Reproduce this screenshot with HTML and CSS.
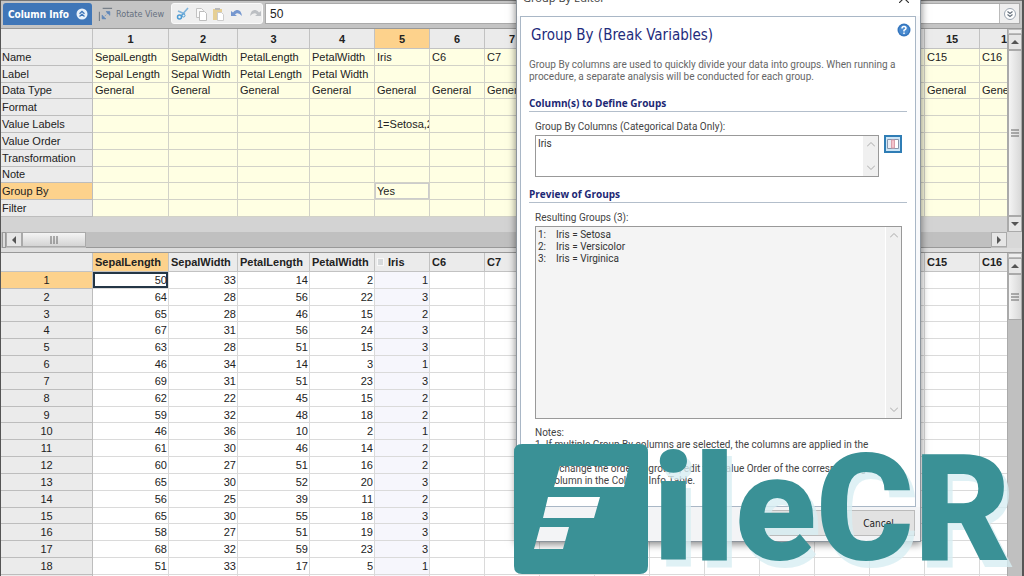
FILE: index.html
```html
<!DOCTYPE html>
<html lang="en">
<head>
<meta charset="utf-8">
<title>Group By Editor</title>
<link rel="stylesheet" href="styles.css">
</head>
<body>
<main class="app">
  <header class="toolbar">
    <button class="tab" type="button">Column Info
      <svg class="tab-icon" viewBox="0 0 12 12"><circle cx="6" cy="6" r="5.5" fill="#e8f1fa"/><path d="M3.5 5.8 6 3.5l2.5 2.3M3.5 8.6 6 6.3l2.5 2.3" fill="none" stroke="#3f76b8" stroke-width="1.3"/></svg>
    </button>
    <button class="rotate" type="button">
      <svg class="rotate-icon" viewBox="0 0 16 16"><path d="M1.500 5v10M5 1.500h10" stroke="#777f88" stroke-width="1.2"/><path d="M5 12 12 5" stroke="#7d9cc4" stroke-dasharray="2 1"/><path d="M8.500 5H12.500V9M4.500 8.500V12.500H8.500" fill="#5f86b8" stroke="#5f86b8"/></svg>
      Rotate View
    </button>
    <div class="tools">
      <button type="button" aria-label="Cut"><svg viewBox="0 0 14 14"><path d="M12 1 5 9M2 4l7 3" stroke="#7fb4dc" stroke-width="1.600"/><circle cx="3.500" cy="10" r="2" fill="none" stroke="#4d9bd3" stroke-width="1.500"/><circle cx="7.500" cy="8.500" r="1.500" fill="none" stroke="#4d9bd3"/></svg></button>
      <button type="button" aria-label="Copy"><svg viewBox="0 0 14 14"><path d="M2.500 1.500h5l2 2v7h-7z" fill="#fafafa" stroke="#c3c3c3"/><path d="M5.500 4.500h5l2 2v7h-7z" fill="#fff" stroke="#bdbdbd"/></svg></button>
      <button type="button" aria-label="Paste"><svg viewBox="0 0 14 14"><path d="M1 2h9v11H1z" fill="#e6cf94"/><path d="M3 1h5v2H3z" fill="#b9b9b9"/><path d="M5.500 5.500h4l2 2v6h-6z" fill="#fff" stroke="#ccc"/></svg></button>
      <button type="button" aria-label="Undo"><svg viewBox="0 0 14 14"><path d="M1 4v5h6L5 7.500Q8 4.500 12 9 11 2 6.500 3 4 3.500 3 5.500z" fill="#7597cf"/></svg></button>
      <button type="button" aria-label="Redo"><svg viewBox="0 0 14 14"><path d="M13 4v5H7l2-1.500Q6 4.500 2 9 3 2 7.500 3 10 3.500 11 5.500z" fill="#bcbfc3"/></svg></button>
    </div>
    <div class="formula">
      <input type="text" value="50" aria-label="Cell value">
      <button type="button" aria-label="Expand"><svg viewBox="0 0 12 12"><circle cx="6" cy="6" r="5.500" fill="#fff" stroke="#9aa4b0"/><path d="M3.500 3.500 6 5.500l2.500-2M3.500 6.500 6 8.500l2.500-2" fill="none" stroke="#66717d" stroke-width="1.200"/></svg></button>
    </div>
  </header>

  <section class="pane info-pane">
    <div class="pane-view">
      <table class="sheet info" id="info"></table>
    </div>
    <div class="vbar">
      <span class="split"></span>
      <button type="button" class="arrow" aria-label="Scroll up"><svg viewBox="0 0 8 8"><path d="M0 6h8L4 2z"/></svg></button>
      <span class="thumb"><svg viewBox="0 0 8 8"><path d="M0 1h8M0 4h8M0 7h8" stroke="#666"/></svg></span>
      <button type="button" class="arrow" aria-label="Scroll down"><svg viewBox="0 0 8 8"><path d="M0 2h8L4 6z"/></svg></button>
    </div>
  </section>
  <div class="hbar">
    <span class="split"></span>
    <button type="button" class="arrow" aria-label="Scroll left"><svg viewBox="0 0 8 8"><path d="M6 0v8L2 4z"/></svg></button>
    <span class="thumb"><svg viewBox="0 0 8 8"><path d="M1 0v8M4 0v8M7 0v8" stroke="#666"/></svg></span>
    <span class="track"></span>
    <button type="button" class="arrow" aria-label="Scroll right"><svg viewBox="0 0 8 8"><path d="M2 0v8l4-4z"/></svg></button>
    <span class="corner"></span>
  </div>
  <section class="pane data-pane">
    <div class="pane-view">
      <table class="sheet data" id="data"></table>
    </div>
    <div class="vbar">
      <span class="split"></span>
      <button type="button" class="arrow" aria-label="Scroll up"><svg viewBox="0 0 8 8"><path d="M0 6h8L4 2z"/></svg></button>
      <span class="thumb short"><svg viewBox="0 0 8 8"><path d="M0 1h8M0 4h8M0 7h8" stroke="#666"/></svg></span>
    </div>
  </section>
</main>

<div class="dialog" role="dialog" aria-labelledby="dialog-title">
  <div class="titlebar">
    <span id="dialog-title">Group By Editor</span>
    <button type="button" class="close" aria-label="Close"><svg viewBox="0 0 10 10"><path d="M0 0 10 10M10 0 0 10" stroke="#333" stroke-width="1.200"/></svg></button>
  </div>
  <div class="panel">
    <div class="heading">
      <h1>Group By (Break Variables)</h1>
      <button type="button" class="help" aria-label="Help"><svg viewBox="0 0 14 14"><circle cx="7" cy="7" r="6.500" fill="#3475bd"/><circle cx="7" cy="7" r="5" fill="#4a8bd0"/><path d="M5 5.500Q5 3.500 7 3.500T9 5.300Q9 6.300 7 7.300V8.500M7 9.500v1.600" fill="none" stroke="#fff" stroke-width="1.500"/></svg></button>
    </div>
    <p class="intro">Group By columns are used to quickly divide your data into groups. When running a<br>procedure, a separate analysis will be conducted for each group.</p>
    <h2>Column(s) to Define Groups</h2>
    <div class="field">
      <label for="columns">Group By Columns (Categorical Data Only):</label>
      <div class="field-row">
        <div class="box small">
          <textarea id="columns">Iris</textarea>
          <div class="box-scroll"><svg viewBox="0 0 8 5"><path d="M0 4.500 4 .5l4 4"/></svg><svg viewBox="0 0 8 5"><path d="M0 .5l4 4 4-4"/></svg></div>
        </div>
        <button type="button" class="picker" aria-label="Select columns"><svg viewBox="0 0 12 10"><path d="M.5.5h11v9H.5z" fill="#fff" stroke="#8796ad"/><path d="M1 1h3v8H1z" fill="#e8ecf4"/><path d="M4.500 1h3v8h-3z" fill="#f4c3cc" stroke="#d9a0ac"/></svg></button>
      </div>
    </div>
    <h2>Preview of Groups</h2>
    <div class="field">
      <label for="groups">Resulting Groups (3):</label>
      <div class="box large">
        <textarea id="groups" readonly>1:	Iris = Setosa
2:	Iris = Versicolor
3:	Iris = Virginica</textarea>
        <div class="box-scroll"><svg viewBox="0 0 8 5"><path d="M0 4.500 4 .5l4 4"/></svg><svg viewBox="0 0 8 5"><path d="M0 .5l4 4 4-4"/></svg></div>
      </div>
      <div class="notes">
        <p>Notes:</p>
        <p>1. If multiple Group By columns are selected, the columns are applied in the</p>
        <p class="hang">order listed.</p>
        <p>2. To change the order of groups, edit the Value Order of the corresponding</p>
        <p class="hang">column in the Column Info Table.</p>
      </div>
    </div>
  </div>
  <div class="actions">
    <button type="button" class="ok">OK</button>
    <button type="button">Cancel</button>
  </div>
</div>

<div class="brand">
  <svg class="brand-mark" viewBox="0 0 134 130"><path fill="#3a9196" fill-rule="evenodd" d="M8 0H126Q134 0 134 8V122Q134 130 126 130H8Q0 130 0 122V8Q0 0 8 0ZM46 22 40 43H110L115 22ZM34 53 29 74H80L86 53ZM26 83 20 105H49L55 83Z"/></svg>
  <span class="brand-name">ileCR</span>
</div>
<script src="sheets.js"></script>
</body>
</html>
```
FILE: styles.css
```css
* { box-sizing: border-box; }
body { margin: 0; height: 100vh; overflow: hidden; position: relative; font-family: "Liberation Sans", Arial, sans-serif; font-size: 11px; color: #222; }
button { border: 0; padding: 0; margin: 0; background: none; font: inherit; color: inherit; }
svg { display: block; }

.app { height: 100vh; display: flex; flex-direction: column; background: #d3d3d3; border-left: 1px solid #555; border-right: 2px solid #555; }

/* Toolbar */
.toolbar { flex: none; height: 29px; display: flex; align-items: flex-start; padding: 2px 2px 0; background: #c4c4c4; border-top: 1px solid #777; border-bottom: 1px solid #999; }
.tab { width: 89px; height: 22px; display: flex; align-items: center; justify-content: space-between; padding: 0 4px 0 5px; background: #3f76b8; border-radius: 3px 3px 0 0; color: #fff; font: bold 10px "DejaVu Sans Condensed", sans-serif; white-space: nowrap; }
.tab-icon { width: 12px; height: 12px; }
.rotate { width: 79px; height: 22px; display: flex; align-items: center; gap: 3px; padding-left: 6px; font: 9px "DejaVu Sans Condensed", sans-serif; color: #64707f; white-space: nowrap; }
.rotate-icon { width: 15px; height: 15px; flex: none; }
.tools { width: 92px; height: 21px; display: flex; align-items: center; gap: 4px; padding: 0 4px; background: #efefef; border: 1px solid #fafafa; border-radius: 3px; }
.tools svg { width: 14px; height: 14px; }
.formula { flex: 1; height: 21px; display: flex; margin-left: 2px; border: 1px solid #aaa; background: #fff; }
.formula input { flex: 1; min-width: 0; border: 0; outline: 0; padding: 0 4px; font: 12px "Liberation Sans", Arial, sans-serif; color: #222; }
.formula button { width: 20px; display: grid; place-items: center; background: #eee; border-left: 1px solid #bbb; }
.formula svg { width: 12px; height: 12px; }

/* Sheets */
.pane { display: flex; flex: none; min-width: 0; }
.pane-view { flex: 1; min-width: 0; overflow: hidden; }
.info-pane { height: 203px; }
.data-pane { flex: 1 0 0; min-height: 0; border-top: 1px solid #999; overflow: hidden; }
.sheet { table-layout: fixed; border-collapse: separate; border-spacing: 0; line-height: 14px; width: 1034px; }
.info { height: 188px; }
.data { height: 339px; }
.c-head { width: 92px; } .c-1 { width: 76px; } .c-2 { width: 69px; } .c-3 { width: 72px; } .c-4 { width: 65px; } .c-n { width: 55px; }
.sheet th, .sheet td { padding: 0 2px; border-right: 1px solid #d2d2c8; border-bottom: 1px solid #d2d2c8; overflow: hidden; white-space: nowrap; text-align: left; }
.sheet thead th { height: 19px; background: #ebebeb; border-color: #c2c2c2; font-weight: bold; }
.sheet tbody th { background: #ebebeb; border-color: #bdbdbd; font-weight: normal; }
.sheet tbody tr { height: 15px; }
.info thead th { height: 20px; text-align: center; }
.info td { background: #ffffe3; }
.info tbody th { padding-left: 1px; }
.data td { background: #fff; border-color: #dadada; text-align: right; padding-right: 1px; }
.data tbody th { text-align: center; }
.data td.tint { background: #f6f6fc; }
.sheet thead th.on, .sheet tbody th.on { background: #fdd28c; }
.info td.focus { box-shadow: inset 0 0 0 1px #ccc; }
.data td.focus { box-shadow: inset 0 0 0 2px #243646; }
.th-flag { display: inline-block; width: 7px; height: 8px; margin-right: 4px; background: #d6d9db; border: 1px solid #f8f8f8; }

/* Scrollbars */
.vbar { width: 15px; flex: none; display: flex; flex-direction: column; background: #c0c0c0; border-left: 1px solid #aaa; }
.vbar .split { height: 5px; flex: none; background: #eee; border: 1px solid #bbb; }
.arrow { flex: none; height: 16px; display: grid; place-items: center; background: #e6e6e6; border: 1px solid #aaa; }
.arrow svg { width: 8px; height: 8px; fill: #555; }
.thumb { display: grid; place-items: center; background: linear-gradient(90deg, #f4f4f4, #d8d8d8); border: 1px solid #aaa; }
.thumb svg { width: 8px; height: 8px; }
.vbar .thumb { flex: 1; }
.vbar .short { flex: none; height: 46px; }
.hbar { flex: none; height: 20px; display: flex; padding-left: 1px; background: #c0c0c0; border-bottom: 4px solid #dedede; }
.hbar .split { width: 4px; border: 1px solid #999; background: #ddd; }
.hbar .arrow { width: 16px; height: 15px; }
.hbar .thumb { width: 64px; height: 15px; background: linear-gradient(#f4f4f4, #d4d4d4); }
.hbar .track { flex: 1; border-bottom: 1px solid #999; }
.hbar .corner { width: 15px; background: #d8d8d8; }

/* Dialog */
.dialog { position: absolute; left: 516px; top: -13px; width: 405px; background: #f8f9fb; border: 1px solid #8c949c; box-shadow: 0 2px 8px rgba(0, 0, 0, .5); font: 10px/12px Roboto, sans-serif; color: #444; }
.dialog p, .dialog h1, .dialog h2 { margin: 0; }
.titlebar { height: 28px; display: flex; align-items: flex-start; justify-content: space-between; padding: 3px 11px 0 6px; background: #fff; font: 11px/14px "Noto Sans", sans-serif; }
.close svg { width: 10px; height: 10px; margin-top: 2px; }
.panel { height: 491px; margin: 0 4px 0 3px; padding: 4px 8px 0; background: #fff; border: 1px solid #a9b7c6; }
.heading { display: flex; justify-content: space-between; }
.heading h1 { padding: 3px 0 0 2px; font: 15px/22px "DejaVu Sans Condensed", sans-serif; color: #1e2c7c; }
.help { width: 14px; height: 14px; margin: 2px -4px 0 0; }
.help svg { width: 14px; height: 14px; }
.intro { padding-top: 13px; color: #666; white-space: nowrap; }
.dialog h2 { font: bold 10px/15px "Open Sans", sans-serif; color: #1c2874; border-bottom: 1px solid #b3becb; margin-top: 13px; }
.field { padding: 7px 2px 0 6px; }
.field label { display: block; line-height: 15px; }
.field-row { display: flex; gap: 5px; }
.box { display: flex; border: 1px solid #999; background: #fff; margin-top: 1px; }
.box.small { flex: 1; height: 42px; }
.box.large { height: 193px; background: #f4f4f4; margin-right: 3px; }
.box textarea { flex: 1; min-width: 0; border: 0; outline: 0; resize: none; overflow: hidden; padding: 2px; background: transparent; font: inherit; color: #333; tab-size: 18px; }
.box-scroll { width: 16px; display: flex; flex-direction: column; align-items: center; justify-content: space-between; padding: 6px 0; background: #f0f0f0; border-left: 1px solid #fff; }
.box-scroll svg { width: 8px; height: 5px; fill: none; stroke: #aaa; }
.picker { width: 18px; height: 18px; display: grid; place-items: center; margin: 1px 3px 0 0; background: #cde6f7; border: 2px solid #2f7db5; }
.picker svg { width: 12px; height: 10px; }
.field + h2 { margin-top: 10px; }
.notes { padding-top: 8px; white-space: nowrap; }
.notes .hang { padding-left: 14px; }
.actions { height: 34px; display: flex; justify-content: flex-end; gap: 9px; padding: 3px 5px 5px; background: #f3f4f6; }
.actions button { width: 73px; background: #e2e2e2; border: 1px solid #bbb; font: 10px "DejaVu Sans Condensed", sans-serif; color: #222; }
.actions .ok { color: #777; }

/* Brand overlay */
.brand { position: absolute; left: 514px; top: 444px; display: flex; gap: 5px; pointer-events: none; }
.brand-mark { width: 134px; height: 130px; flex: none; }
.brand-name { font: 900 149px/130px Roboto, sans-serif; color: #3a9196; text-shadow: 5px 7px 0 rgba(215, 238, 242, .8); white-space: nowrap; }
```
FILE: sheets.js
```js
const COLUMN_COUNT = 17;
const widths = ["c-head", "c-1", "c-2", "c-3", "c-4"];
// Columns 8 to 14 scroll behind the dialog and carry no labels.
const labelled = n => n < 8 || n > 14;

function colgroup() {
  let out = "<colgroup>";
  for (let i = 0; i <= COLUMN_COUNT; i++) out += `<col class="${widths[i] || "c-n"}">`;
  return out + "</colgroup>";
}

function buildInfo() {
  const names = ["SepalLength", "SepalWidth", "PetalLength", "PetalWidth", "Iris"];
  const labels = ["Sepal Length", "Sepal Width", "Petal Length", "Petal Width"];
  const shown = n => labelled(n) && n < 17;
  const rows = {
    "Name": n => names[n - 1] || (shown(n) ? "C" + n : ""),
    "Label": n => labels[n - 1] || "",
    "Data Type": n => shown(n) ? "General" : "",
    "Format": () => "",
    "Value Labels": n => n === 5 ? "1=Setosa,2" : "",
    "Value Order": () => "",
    "Transformation": () => "",
    "Note": () => "",
    "Group By": n => n === 5 ? "Yes" : "",
    "Filter": () => ""
  };
  let html = colgroup() + "<thead><tr><th></th>";
  for (let n = 1; n <= COLUMN_COUNT; n++) html += `<th class="${n === 5 ? "on" : ""}">${shown(n) ? n : ""}</th>`;
  html += "</tr></thead><tbody>";
  for (const [name, value] of Object.entries(rows)) {
    html += `<tr><th class="${name === "Group By" ? "on" : ""}">${name}</th>`;
    for (let n = 1; n <= COLUMN_COUNT; n++) {
      html += `<td class="${name === "Group By" && n === 5 ? "focus" : ""}">${value(n)}</td>`;
    }
    html += "</tr>";
  }
  document.getElementById("info").innerHTML = html + "</tbody>";
}

function buildData() {
  const names = ["SepalLength", "SepalWidth", "PetalLength", "PetalWidth", '<span class="th-flag"></span>Iris'];
  const values = [
    [50, 33, 14, 2, 1], [64, 28, 56, 22, 3], [65, 28, 46, 15, 2], [67, 31, 56, 24, 3],
    [63, 28, 51, 15, 3], [46, 34, 14, 3, 1], [69, 31, 51, 23, 3], [62, 22, 45, 15, 2],
    [59, 32, 48, 18, 2], [46, 36, 10, 2, 1], [61, 30, 46, 14, 2], [60, 27, 51, 16, 2],
    [65, 30, 52, 20, 3], [56, 25, 39, 11, 2], [65, 30, 55, 18, 3], [58, 27, 51, 19, 3],
    [68, 32, 59, 23, 3], [51, 33, 17, 5, 1], []
  ];
  let html = colgroup() + "<thead><tr><th></th>";
  for (let n = 1; n <= COLUMN_COUNT; n++) {
    html += `<th class="${n === 1 ? "on" : ""}">${names[n - 1] || (labelled(n) && n < 17 ? "C" + n : "")}</th>`;
  }
  html += "</tr></thead><tbody>";
  values.forEach((row, r) => {
    html += `<tr><th class="${r === 0 ? "on" : ""}">${row.length ? r + 1 : ""}</th>`;
    for (let n = 1; n <= COLUMN_COUNT; n++) {
      const cls = r === 0 && n === 1 ? "focus" : n === 5 ? "tint" : "";
      html += `<td class="${cls}">${row[n - 1] ?? ""}</td>`;
    }
    html += "</tr>";
  });
  document.getElementById("data").innerHTML = html + "</tbody>";
}

buildInfo();
buildData();
```
